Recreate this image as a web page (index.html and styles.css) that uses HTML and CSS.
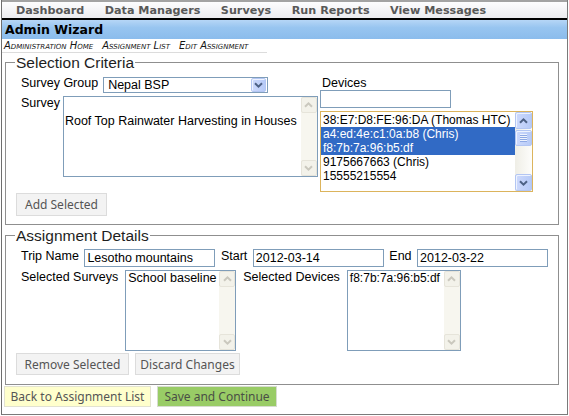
FILE: index.html
```html
<!DOCTYPE html>
<html>
<head>
<meta charset="utf-8">
<title>Admin Wizard</title>
<link rel="stylesheet" href="styles.css">
</head>
<body>
<div class="page">
  <nav class="topnav">
    <span class="nav-item">Dashboard</span>
    <span class="nav-item">Data Managers</span>
    <span class="nav-item">Surveys</span>
    <span class="nav-item">Run Reports</span>
    <span class="nav-item">View Messages</span>
  </nav>
  <h1 class="title">Admin Wizard</h1>
  <div class="crumbs">
    <span class="crumb">Administration Home</span>
    <span class="crumb">Assignment List</span>
    <span class="crumb">Edit Assignment</span>
  </div>

  <fieldset class="box box-sel">
    <legend class="box-legend">Selection Criteria</legend>
    <div class="sel-grid">
      <div class="sel-left">
        <div class="row row-group">
          <span class="lbl">Survey Group</span>
          <div class="dropdown">
            <span class="dd-text">Nepal BSP</span>
            <span class="xp-btn dd-btn"><svg width="9" height="6" viewBox="0 0 9 6"><path d="M1 1.2 L4.5 4.6 L8 1.2" fill="none" stroke="currentColor" stroke-width="2"/></svg></span>
          </div>
        </div>
        <div class="row row-survey">
          <span class="lbl">Survey</span>
          <div class="listbox list-survey">
            <div class="opts opts-survey">
              <div class="opt">Roof Top Rainwater Harvesting in Houses</div>
            </div>
            <div class="sb sb-off">
              <span class="off-btn"><svg width="9" height="6" viewBox="0 0 9 6"><path d="M1 4.8 L4.5 1.4 L8 4.8" fill="none" stroke="currentColor" stroke-width="2"/></svg></span>
              <span class="sb-track"></span>
              <span class="off-btn"><svg width="9" height="6" viewBox="0 0 9 6"><path d="M1 1.2 L4.5 4.6 L8 1.2" fill="none" stroke="currentColor" stroke-width="2"/></svg></span>
            </div>
          </div>
        </div>
      </div>
      <div class="sel-right">
        <span class="lbl lbl-devices">Devices</span>
        <input class="field field-filter" type="text" value="">
        <div class="listbox list-devices">
          <div class="opts opts-devices">
            <div class="opt">38:E7:D8:FE:96:DA (Thomas HTC)</div>
            <div class="opt opt-on">a4:ed:4e:c1:0a:b8 (Chris)</div>
            <div class="opt opt-on">f8:7b:7a:96:b5:df</div>
            <div class="opt">9175667663 (Chris)</div>
            <div class="opt">15555215554</div>
          </div>
          <div class="sb sb-xp">
            <span class="xp-btn sb-btn"><svg width="9" height="6" viewBox="0 0 9 6"><path d="M1 4.8 L4.5 1.4 L8 4.8" fill="none" stroke="currentColor" stroke-width="2"/></svg></span>
            <span class="xp-btn sb-thumb"><span class="grip"></span></span>
            <span class="sb-track"></span>
            <span class="xp-btn sb-btn"><svg width="9" height="6" viewBox="0 0 9 6"><path d="M1 1.2 L4.5 4.6 L8 1.2" fill="none" stroke="currentColor" stroke-width="2"/></svg></span>
          </div>
        </div>
      </div>
    </div>
    <button class="btn btn-add" type="button">Add Selected</button>
  </fieldset>

  <fieldset class="box box-assign">
    <legend class="box-legend">Assignment Details</legend>
    <div class="row row-trip">
      <span class="lbl">Trip Name</span>
      <input class="field" type="text" value="Lesotho mountains">
      <span class="lbl">Start</span>
      <input class="field" type="text" value="2012-03-14">
      <span class="lbl">End</span>
      <input class="field" type="text" value="2012-03-22">
    </div>
    <div class="row row-chosen">
      <span class="lbl">Selected Surveys</span>
      <div class="listbox list-chosen-surveys">
        <div class="opts"><div class="opt">School baseline</div></div>
        <div class="sb sb-off">
          <span class="off-btn"><svg width="9" height="6" viewBox="0 0 9 6"><path d="M1 4.8 L4.5 1.4 L8 4.8" fill="none" stroke="currentColor" stroke-width="2"/></svg></span>
          <span class="sb-track"></span>
          <span class="off-btn"><svg width="9" height="6" viewBox="0 0 9 6"><path d="M1 1.2 L4.5 4.6 L8 1.2" fill="none" stroke="currentColor" stroke-width="2"/></svg></span>
        </div>
      </div>
      <span class="lbl">Selected Devices</span>
      <div class="listbox list-chosen-devices">
        <div class="opts opts-small"><div class="opt">f8:7b:7a:96:b5:df</div></div>
        <div class="sb sb-off">
          <span class="off-btn"><svg width="9" height="6" viewBox="0 0 9 6"><path d="M1 4.8 L4.5 1.4 L8 4.8" fill="none" stroke="currentColor" stroke-width="2"/></svg></span>
          <span class="sb-track"></span>
          <span class="off-btn"><svg width="9" height="6" viewBox="0 0 9 6"><path d="M1 1.2 L4.5 4.6 L8 1.2" fill="none" stroke="currentColor" stroke-width="2"/></svg></span>
        </div>
      </div>
    </div>
    <div class="btn-row">
      <button class="btn btn-remove" type="button">Remove Selected</button>
      <button class="btn btn-discard" type="button">Discard Changes</button>
    </div>
  </fieldset>

  <div class="actions">
    <button class="btn btn-back" type="button">Back to Assignment List</button>
    <button class="btn btn-save" type="button">Save and Continue</button>
  </div>
</div>
</body>
</html>
```
FILE: styles.css
```css
* { box-sizing: border-box; }

html, body {
  margin: 0;
  padding: 0;
  background: #fff;
}

body {
  font-family: "Liberation Sans", Arial, sans-serif;
  font-size: 12.5px;
  color: #000;
}

.page {
  width: 567px;
  margin-left: 1px;
  border-left: 1px solid #6e6e6e;
  border-right: 1px solid #7a7a7a;
  border-bottom: 1px solid #7a7a7a;
  padding-bottom: 7px;
}

/* top navigation */
.topnav {
  display: flex;
  gap: 20.5px;
  height: 20px;
  padding: 1px 0 0 14px;
  border-top: 2px solid #a3a3a3;
  border-bottom: 2px solid #000;
  background: linear-gradient(#fdfdfe, #ebebef);
}

.nav-item {
  font-family: "DejaVu Sans", Verdana, sans-serif;
  font-weight: bold;
  font-size: 11.2px;
  line-height: 15px;
  color: #585858;
  white-space: nowrap;
}

.title {
  margin: 0;
  height: 19px;
  padding-left: 3px;
  font-family: "DejaVu Sans", Verdana, sans-serif;
  font-weight: bold;
  font-size: 12.5px;
  line-height: 19px;
  color: #000;
  background: linear-gradient(#b6d6f6 0%, #98c5f0 40%, #8bbcec 100%);
}

.crumbs {
  display: flex;
  gap: 9px;
  width: 265px;
  height: 14px;
  padding-left: 2px;
  border-bottom: 1px solid #dcdcdc;
  font-family: "DejaVu Sans", Verdana, sans-serif;
  font-size: 10px;
  font-style: oblique;
  font-variant: small-caps;
  line-height: 13px;
  color: #151515;
}

.crumb { white-space: nowrap; }

/* fieldsets */
.box {
  margin: 1px 8px 0 3px;
  padding: 5px 9px 8px 10px;
  border: 1px solid #8f8f8f;
  min-width: 0;
}

.box-assign {
  margin-top: 2px;
  padding-bottom: 9px;
}

.box-legend {
  margin-left: -1px;
  padding: 0 1px;
  font-size: 15.5px;
  line-height: 17px;
  color: #1e1e1e;
}

.row {
  display: flex;
  align-items: flex-start;
}

.lbl {
  line-height: 14px;
  white-space: nowrap;
}

.sel-grid {
  display: flex;
  gap: 2px;
  padding-left: 5px;
}

.sel-left {
  width: 297px;
  display: flex;
  flex-direction: column;
  gap: 3px;
}

.sel-right {
  display: flex;
  flex-direction: column;
  align-items: flex-start;
}

.lbl-devices { padding-left: 2px; }

/* dropdown */
.dropdown {
  display: flex;
  align-items: center;
  width: 165px;
  height: 16px;
  margin: 1px 0 0 5px;
  border: 1px solid #7f9db9;
  background: #fff;
}

.dd-text {
  flex: 1;
  padding-left: 4px;
  line-height: 14px;
}

.dd-btn {
  width: 15px;
  height: 14px;
  margin-right: 1px;
}

/* text fields */
.field {
  width: 131px;
  height: 18px;
  margin: 0;
  padding: 0 2px;
  border: 1px solid #7f9db9;
  font-family: "Liberation Sans", Arial, sans-serif;
  font-size: 12.5px;
  color: #000;
  background: #fff;
  outline: none;
}

/* list boxes */
.listbox {
  display: flex;
  height: 81px;
  border: 1px solid #7f9db9;
  background: #fff;
  overflow: hidden;
}

.opts {
  flex: 1;
  min-width: 0;
}

.opt {
  line-height: 14px;
  padding-left: 2px;
  white-space: nowrap;
}

.opt-on {
  background: #316ac5;
  color: #fff;
}

.list-survey {
  width: 255px;
  margin-left: 3px;
}

.opts-survey { padding-top: 17px; }
.opts-survey .opt { padding-left: 1px; }

.list-devices {
  width: 213px;
  margin-top: 3px;
  border-color: #dcb45c;
}

.opts-devices {
  padding-top: 1px;
  font-size: 12px;
}

.opts-small { font-size: 12px; }

/* scrollbars */
.sb {
  display: flex;
  flex-direction: column;
}

.sb-off {
  width: 16px;
  background: #f7f6ef;
}

.off-btn {
  display: flex;
  align-items: center;
  justify-content: center;
  height: 16px;
  border: 1px solid #e6e4da;
  border-radius: 2px;
  background: #f3f2ea;
  color: #cac8be;
}

.sb-track { flex: 1; }

.sb-xp {
  width: 17px;
  background: linear-gradient(to right, #efeee6, #fdfdfb);
}

.xp-btn {
  display: flex;
  align-items: center;
  justify-content: center;
  border: 1px solid #b3c6f3;
  border-radius: 2px;
  background: linear-gradient(to right, #cdd9fc, #b6caf7);
  box-shadow: inset 1px 1px 0 #eef3fe;
  color: #4d6185;
}

.sb-btn { height: 17px; }
.sb-thumb { height: 16px; margin-top: 1px; }

.grip {
  width: 7px;
  height: 8px;
  background: repeating-linear-gradient(#eef3fe 0 1px, #8ea9e4 1px 2px);
}

/* assignment rows */
.row-trip {
  gap: 5.5px;
  padding-left: 5px;
}

.row-chosen {
  gap: 7px;
  margin-top: 3px;
  padding-left: 5px;
}

.list-chosen-surveys { width: 111px; }
.list-chosen-devices { width: 114px; }

/* buttons */
.btn {
  margin: 0;
  padding: 0;
  border: 1px solid #dcdcdc;
  background: #f3f3f3;
  font-family: "Noto Sans", "DejaVu Sans", sans-serif;
  font-size: 12px;
  color: #555;
  text-align: center;
  white-space: nowrap;
}

.btn-add {
  display: block;
  width: 91px;
  height: 23px;
  margin-top: 1px;
}

.btn-row {
  display: flex;
  gap: 6px;
  margin-top: 2px;
}

.btn-remove { width: 113px; height: 22px; }
.btn-discard { width: 105px; height: 22px; }

.actions {
  display: flex;
  gap: 6px;
  padding: 1px 0 0 2px;
}

.btn-back {
  width: 147px;
  height: 21px;
  background: #ffffcc;
  border-color: #e2e2d0;
}

.btn-save {
  width: 120px;
  height: 21px;
  background: #99cc66;
  border-color: #d6dccf;
  color: #4a4f45;
}
```
